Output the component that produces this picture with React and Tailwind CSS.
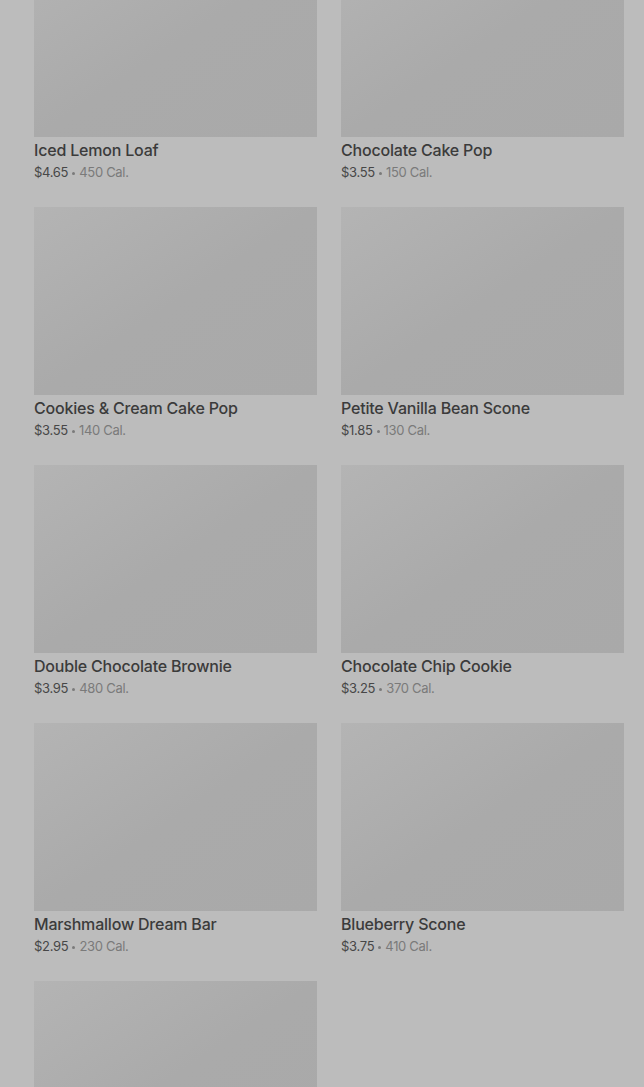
import React from "react";

const items = [
  { name: "Iced Lemon Loaf", price: "$4.65", cal: "450 Cal." },
  { name: "Chocolate Cake Pop", price: "$3.55", cal: "150 Cal." },
  { name: "Cookies & Cream Cake Pop", price: "$3.55", cal: "140 Cal." },
  { name: "Petite Vanilla Bean Scone", price: "$1.85", cal: "130 Cal." },
  { name: "Double Chocolate Brownie", price: "$3.95", cal: "480 Cal." },
  { name: "Chocolate Chip Cookie", price: "$3.25", cal: "370 Cal." },
  { name: "Marshmallow Dream Bar", price: "$2.95", cal: "230 Cal." },
  { name: "Blueberry Scone", price: "$3.75", cal: "410 Cal." },
  { name: "", price: "", cal: "" },
];

function Card({ item }) {
  return (
    <div className="flex flex-col">
      <div className="h-[188px] w-full bg-gradient-to-br from-[#b4b4b4] via-[#aaaaaa] to-[#a9a9a9]" />
      {item.name && (
        <>
          <div className="mt-[3px] text-[16px] leading-5 font-medium tracking-[-0.2px] text-[#3b3b3b]">{item.name}</div>
          <div className="mt-[3px] text-[13px] leading-[18px] tracking-[-0.3px] text-[#7a7a7a]">
            <span className="text-[#474747]">{item.price}</span>
            <span className="inline-block w-[3px] h-[3px] rounded-full bg-[#7a7a7a] align-middle mx-[4px]" />
            {item.cal}
          </div>
        </>
      )}
    </div>
  );
}

export default function App() {
  return (
    <div className="min-h-screen h-[1087px] overflow-hidden bg-[#bcbcbc] font-['Inter','Liberation_Sans',sans-serif]">
      <div className="mt-[-51px] pl-[34px] pr-[20px] grid grid-cols-2 gap-x-[24px] gap-y-[26px]">
        {items.map((item, i) => (
          <Card key={i} item={item} />
        ))}
      </div>
    </div>
  );
}
